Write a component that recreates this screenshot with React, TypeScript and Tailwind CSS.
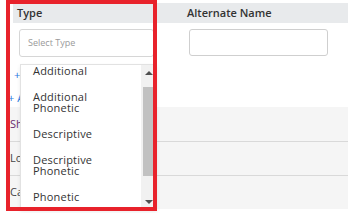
import { } from 'react';

// --- Data ---
const typeOptions = ['Additional', 'Additional Phonetic', 'Descriptive', 'Descriptive Phonetic', 'Phonetic'];
const rows = [
    { label: 'Short Name', color: 'text-[#6a2c70]' },
    { label: 'Local Name', color: 'text-[#444]' },
    { label: 'Catalog Name', color: 'text-[#444]' },
];

// --- Dropdown overlay ---
function TypeDropdown() {
    return (
        <div className="absolute left-[20px] top-[64px] w-[137px] h-[146px] bg-white border border-[#e2e2e2] shadow-[0_2px_4px_rgba(0,0,0,0.08)] flex overflow-hidden">
            <ul className="flex-1 -mt-[8px] text-[11px] leading-[11px] text-[#333] tracking-[0.2px]">
                {typeOptions.map((opt) => (
                    <li key={opt} className="pl-[12px] pr-[30px] py-[7.5px]">{opt}</li>
                ))}
            </ul>
            {/* fake scrollbar */}
            <div className="w-[15px] bg-[#f1f1f1] flex flex-col items-center">
                <div className="h-[15px] flex items-center justify-center">
                    <div className="w-0 h-0 border-l-[4px] border-r-[4px] border-b-[4px] border-l-transparent border-r-transparent border-b-[#505050]" />
                </div>
                <div className="mt-[7px] w-[11px] h-[89px] bg-[#c1c1c1]" />
                <div className="flex-1" />
                <div className="h-[15px] flex items-center justify-center">
                    <div className="w-0 h-0 border-l-[4px] border-r-[4px] border-t-[4px] border-l-transparent border-r-transparent border-t-[#505050]" />
                </div>
            </div>
        </div>
    );
}

export default function App() {
    return (
        <div className="relative w-[348px] h-[213px] overflow-hidden bg-white font-['Open_Sans',sans-serif]">
            {/* header */}
            <div className="mt-[3px] ml-[13px] h-[20px] bg-[#e8eaec] grid grid-cols-[170px_1fr] items-center text-[11px] font-semibold text-[#333]">
                <span className="pl-[4px]">Type</span>
                <span className="pl-[4px]">Alternate Name</span>
            </div>

            {/* inputs */}
            <div className="ml-[13px] mt-[6px] grid grid-cols-[170px_1fr]">
                <div className="ml-[6px] w-[135px] h-[28px] border border-[#d6d6d6] rounded-[3px] flex items-center pl-[8px] text-[9px] text-[#9a9a9a]">
                    Select Type
                </div>
                <div className="ml-[6px] w-[139px] h-[27px] border border-[#cfcfcf] rounded-[3px]" />
            </div>

            {/* add links */}
            <div className="mt-[10px] flex flex-col gap-[8px] text-[11px] leading-[15px] text-[#2a7ae2]">
                <span className="pl-[14px]">+ Add</span>
                <span className="pl-[8px]">+ Add Alternate</span>
            </div>

            {/* name rows */}
            <div className="mt-[2px] ml-[7px] bg-[#f5f5f5] text-[11px]">
                {rows.map((r, i) => (
                    <div key={r.label} className={`h-[34px] flex items-center pl-[3px] ${i > 0 ? 'border-t border-[#d9d9d9]' : ''} ${r.color}`}>
                        {r.label}
                    </div>
                ))}
            </div>

            <TypeDropdown />

            {/* red highlight */}
            <div className="absolute left-[6px] top-0 w-[151px] h-[211px] border-[4px] border-[#e8222b]" />
        </div>
    );
}
